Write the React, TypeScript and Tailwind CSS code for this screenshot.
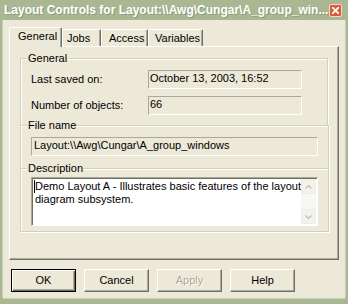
import React from 'react'

const raised =
  'border border-t-white border-l-white border-r-[#716f64] border-b-[#716f64] shadow-[inset_-1px_-1px_0_#aca899]'
const etched =
  'border border-[#d0d0bf] shadow-[inset_1px_1px_0_#fff,1px_1px_0_#fff]'
const staticField =
  'h-[19px] border border-t-[#aca899] border-l-[#aca899] border-r-white border-b-white pl-[1px] pt-[1px] leading-[13px] whitespace-nowrap'

function Tab({ label, width, pad, selected }: { label: string; width: string; pad: string; selected?: boolean }) {
  if (selected) {
    return (
      <div
        className={`relative z-10 -mb-[1px] h-[20px] ${width} ${pad} pt-[2px] leading-[13px] bg-[#ece9d8] border-l border-t border-r border-l-white border-t-white border-r-[#716f64] rounded-t-[2px] shadow-[inset_-1px_0_0_#aca899]`}
      >
        {label}
      </div>
    )
  }
  return (
    <div
      className={`h-[17px] ${width} ${pad} pt-[2px] leading-[13px] border-l border-t border-r border-l-white border-t-white border-r-[#716f64] rounded-t-[2px] shadow-[inset_-1px_0_0_#aca899]`}
    >
      {label}
    </div>
  )
}

function Chevron({ up }: { up?: boolean }) {
  return (
    <svg width="7" height="4" viewBox="0 0 7 4">
      <path
        d={up ? 'M0.5 3.5 L3.5 0.5 L6.5 3.5' : 'M0.5 0.5 L3.5 3.5 L6.5 0.5'}
        fill="none"
        stroke="#c2c2b4"
        strokeWidth="1.3"
      />
    </svg>
  )
}

function Button({ label, primary, disabled }: { label: string; primary?: boolean; disabled?: boolean }) {
  const frame = primary
    ? 'border border-black shadow-[inset_1px_1px_0_#fff,inset_-1px_-1px_0_#716f64,inset_-2px_-2px_0_#aca899]'
    : raised
  return (
    <div
      className={`w-[65px] h-[23px] flex items-center justify-center ${frame} ${
        disabled ? 'text-[#aca899] [text-shadow:1px_1px_0_#fff]' : ''
      }`}
    >
      {label}
    </div>
  )
}

export default function App() {
  return (
    <div className="w-[348px] h-[304px] bg-[#a9b792] font-['Liberation_Sans',Arial,sans-serif] text-[11px] text-black flex flex-col">
      {/* Title bar */}
      <div className="h-[20px] flex items-center pl-[4px] pr-[6px]">
        <div className="flex-1 whitespace-nowrap text-white font-bold text-[12px] leading-[16px] [text-shadow:1px_1px_0_#8d9c75]">
          {'Layout Controls for Layout:\\\\Awg\\Cungar\\A_group_win...'}
        </div>
        <div className="w-[13px] h-[13px] rounded-[2px] border border-[#f3d8cc] bg-[#dd5b3a] flex items-center justify-center">
          <svg width="7" height="7" viewBox="0 0 7 7">
            <path d="M0.8 0.8 L6.2 6.2 M6.2 0.8 L0.8 6.2" stroke="#fff" strokeWidth="1.8" strokeLinecap="square" />
          </svg>
        </div>
      </div>

      {/* Dialog body */}
      <div className="mx-[3px] h-[278px] bg-[#ece9d8] shadow-[-1px_0_0_#c9d1b8,1px_0_0_#c9d1b8,0_1px_0_#c9d1b8]">
        {/* Tabs */}
        <div className="mt-[7px] h-[19px] pl-[6px] flex items-end">
          <Tab label="General" width="w-[53px]" pad="pl-[8px]" selected />
          <Tab label="Jobs" width="w-[39px]" pad="pl-[4px]" />
          <Tab label="Access" width="w-[47px]" pad="pl-[7px]" />
          <Tab label="Variables" width="w-[55px]" pad="pl-[6px]" />
        </div>

        {/* Tab panel */}
        <div className="ml-[6px] w-[330px] h-[214px] border border-t-white border-l-white border-r-[#716f64] border-b-[#716f64] shadow-[inset_-1px_-1px_0_#aca899]">
          {/* General */}
          <fieldset className={`ml-[10px] mt-[5px] w-[308px] pb-[10px] px-[10px] border-b-0 ${etched}`}>
            <legend className="-ml-[4px] px-[1px] leading-[13px] bg-[#ece9d8]">General</legend>
            <div className="mt-[5px] flex items-center">
              <div className="w-[117px]">Last saved on:</div>
              <div className={`w-[154px] ${staticField}`}>October 13, 2003, 16:52</div>
            </div>
            <div className="mt-[7px] flex items-center">
              <div className="w-[117px]">Number of objects:</div>
              <div className={`w-[154px] ${staticField}`}>66</div>
            </div>
          </fieldset>

          {/* File name */}
          <fieldset className={`ml-[10px] -mt-[6px] w-[308px] pb-[12px] px-[10px] border-b-0 ${etched}`}>
            <legend className="-ml-[4px] px-[1px] leading-[13px] bg-[#ece9d8]">File name</legend>
            <div className={`mt-[5px] w-[287px] ${staticField} pl-[2px]`}>
              {'Layout:\\\\Awg\\Cungar\\A_group_windows'}
            </div>
          </fieldset>

          {/* Description */}
          <fieldset className={`ml-[10px] -mt-[6px] w-[308px] pb-[5px] px-[10px] ${etched}`}>
            <legend className="-ml-[4px] px-[1px] leading-[13px] bg-[#ece9d8]">Description</legend>
            <div className="mt-[2px] w-[287px] h-[49px] flex bg-white border border-t-[#aca899] border-l-[#aca899] border-r-white border-b-white shadow-[inset_1px_1px_0_#716f64]">
              <div className="flex-1 pl-[2px] pt-[2px] flex">
                <div className="w-[1px] h-[13px] bg-black" />
                <div className="leading-[13px] whitespace-nowrap">
                  Demo Layout A - Illustrates basic features of the layout
                  <br />
                  diagram subsystem.
                </div>
              </div>
              <div className="w-[16px] mt-[1px] mb-[1px] mr-[1px] flex flex-col justify-between bg-[#f7f7f3]">
                <div className="h-[15px] flex items-center justify-center border border-[#eeede5] bg-[#f3f3ee] rounded-[1px]">
                  <Chevron up />
                </div>
                <div className="h-[15px] flex items-center justify-center border border-[#eeede5] bg-[#f3f3ee] rounded-[1px]">
                  <Chevron />
                </div>
              </div>
            </div>
          </fieldset>
        </div>

        {/* Buttons */}
        <div className="mt-[9px] pl-[8px] flex gap-[8px]">
          <Button label="OK" primary />
          <Button label="Cancel" />
          <Button label="Apply" disabled />
          <Button label="Help" />
        </div>
      </div>
    </div>
  )
}
